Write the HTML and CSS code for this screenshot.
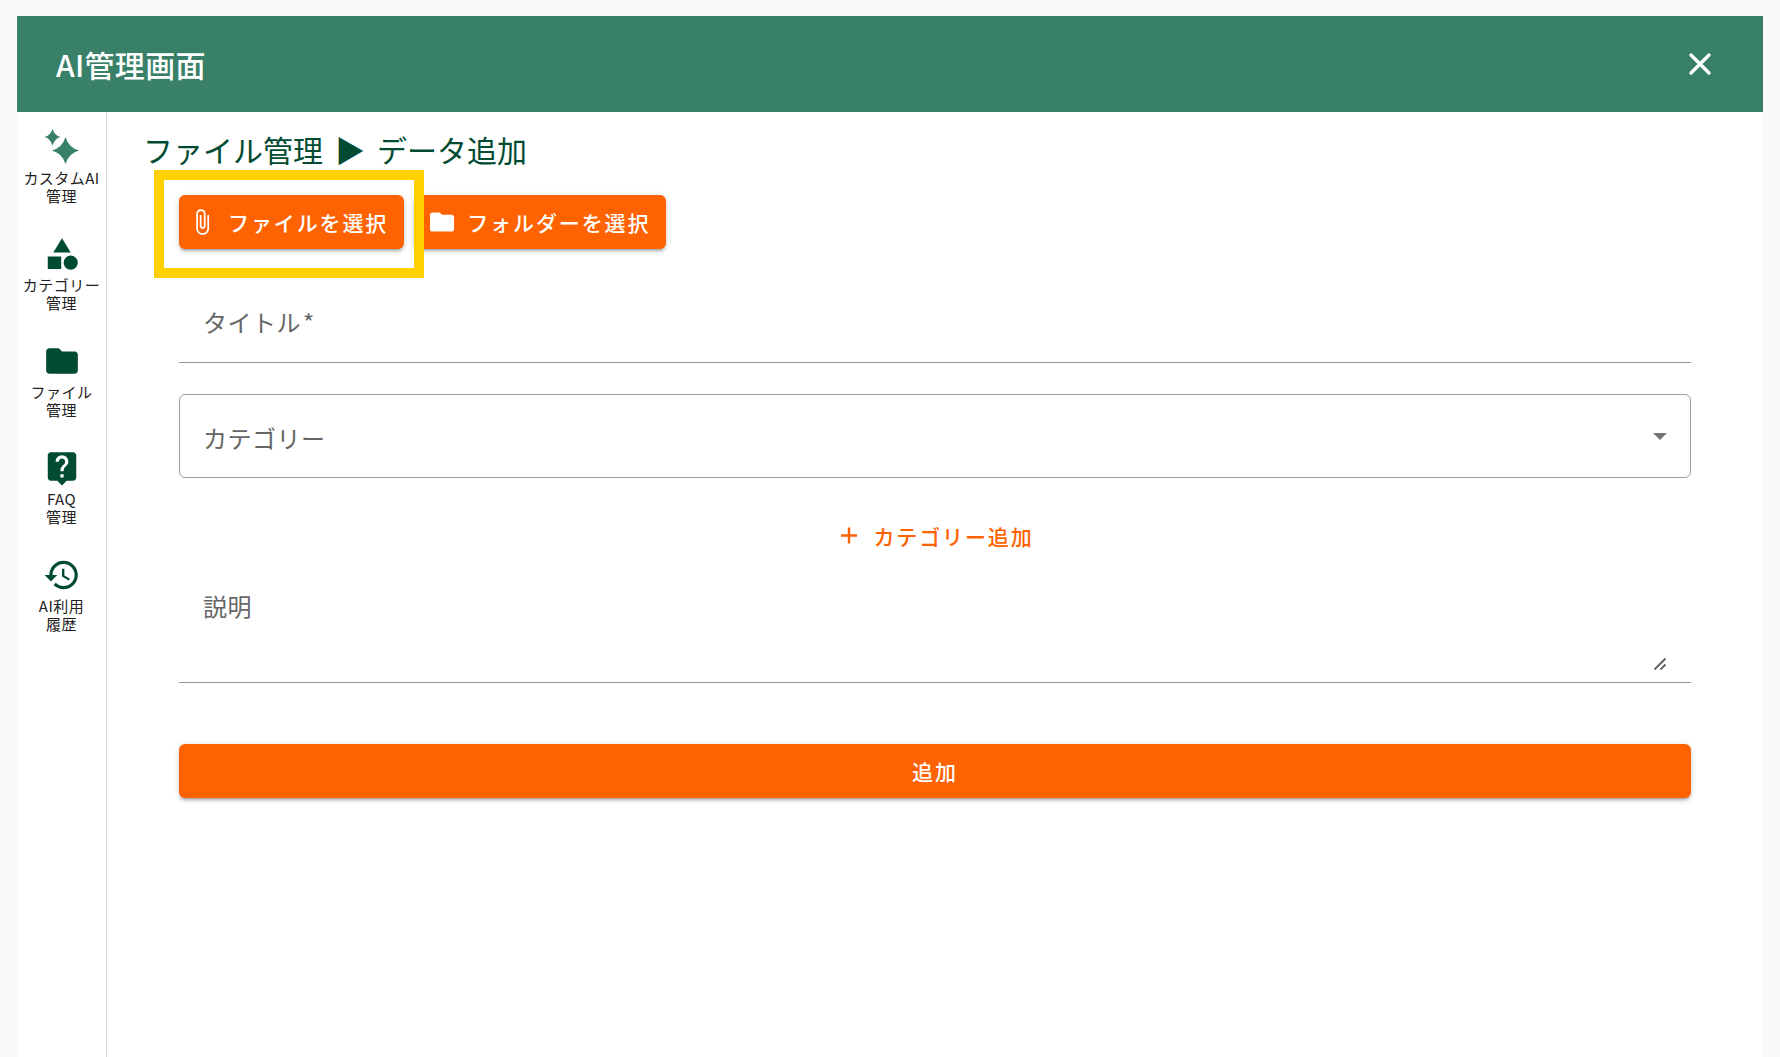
FILE: index.html
```html
<!DOCTYPE html>
<html lang="ja">
<head>
<meta charset="utf-8">
<meta name="viewport" content="width=device-width, initial-scale=1">
<title>AI管理画面</title>
<link rel="stylesheet" href="styles.css">
</head>
<body>
<div class="panel">
  <header class="panel-header">
    <h1 class="panel-title">AI管理画面</h1>
    <button class="close" type="button" aria-label="閉じる">
      <svg viewBox="0 0 24 24" width="24" height="24" fill="none" stroke="currentColor" stroke-width="3.4" stroke-linecap="round"><path d="M3 3l18 18M21 3L3 21"/></svg>
    </button>
  </header>
  <div class="panel-body">
    <nav class="side">
      <a class="side-item" href="#custom">
        <svg class="side-icon side-icon-light" viewBox="0 0 38 38"><path d="M9.500 1Q11.500 7.500 17.500 9Q11.500 10.500 9.500 17.500Q7.500 10.500 1.500 9Q7.500 7.500 9.500 1zM22.500 9Q25.500 19.500 36 22.500Q25.500 25.500 22.500 36Q19.500 25.500 9 22.500Q19.500 19.500 22.500 9z"/></svg>
        <span>カスタムAI<br>管理</span>
      </a>
      <a class="side-item" href="#category">
        <svg class="side-icon" viewBox="0 0 24 24"><path d="M12 2l-5.500 9h11zM3 13.500h8.500v8H3z"/><circle cx="17.500" cy="17.500" r="4.500"/></svg>
        <span>カテゴリー<br>管理</span>
      </a>
      <a class="side-item" href="#file">
        <svg class="side-icon" viewBox="0 0 24 24"><path d="M10 4H4c-1.100 0-2 .9-2 2v12c0 1.100.9 2 2 2h16c1.100 0 2-.9 2-2V8c0-1.100-.9-2-2-2h-8l-2-2z"/></svg>
        <span>ファイル<br>管理</span>
      </a>
      <a class="side-item" href="#faq">
        <svg class="side-icon" viewBox="0 0 24 24"><path d="M19 2H5c-1.110 0-2 .9-2 2v14c0 1.100.89 2 2 2h4l3 3 3-3h4c1.100 0 2-.9 2-2V4c0-1.100-.9-2-2-2zm-6 16h-2v-2h2v2zm2.070-7.750l-.9.920C13.450 11.900 13 12.500 13 14h-2v-.5c0-1.100.45-2.100 1.170-2.830l1.240-1.260c.37-.36.59-.86.59-1.410 0-1.100-.9-2-2-2s-2 .9-2 2H8c0-2.210 1.790-4 4-4s4 1.790 4 4c0 .88-.36 1.680-.93 2.250z"/></svg>
        <span>FAQ<br>管理</span>
      </a>
      <a class="side-item" href="#history">
        <svg class="side-icon" viewBox="0 0 24 24"><path d="M13 3c-4.970 0-9 4.030-9 9H1l3.890 3.890.07.14L9 12H6c0-3.870 3.130-7 7-7s7 3.130 7 7-3.130 7-7 7c-1.930 0-3.680-.79-4.940-2.060l-1.420 1.420C8.270 19.990 10.510 21 13 21c4.970 0 9-4.030 9-9s-4.030-9-9-9zm-1 5v5l4.280 2.540.72-1.210-3.500-2.080V8H12z"/></svg>
        <span>AI利用<br>履歴</span>
      </a>
    </nav>
    <main class="content">
      <h2 class="crumbs"><span>ファイル管理</span><span>▶</span><span>データ追加</span></h2>
      <form class="form">
        <div class="pickers">
          <div class="picked">
            <button class="btn btn-fill" type="button">
              <svg viewBox="6 0 17 24" width="20" height="28" fill="currentColor"><path d="M16.500 6v11.500c0 2.210-1.790 4-4 4s-4-1.790-4-4V5c0-1.380 1.120-2.500 2.500-2.500s2.500 1.120 2.500 2.500v10.500c0 .55-.45 1-1 1s-1-.45-1-1V6H10v9.500c0 1.380 1.120 2.500 2.500 2.500s2.500-1.120 2.500-2.500V5c0-2.210-1.790-4-4-4S7 2.790 7 5v12.500c0 3.040 2.460 5.500 5.500 5.500s5.500-2.460 5.500-5.500V6h-1.500z"/></svg>
              <span>ファイルを選択</span>
            </button>
          </div>
          <button class="btn btn-fill" type="button">
            <svg viewBox="2 2 20 20" width="24" height="24" fill="currentColor"><path d="M10 4H4c-1.100 0-2 .9-2 2v12c0 1.100.9 2 2 2h16c1.100 0 2-.9 2-2V8c0-1.100-.9-2-2-2h-8l-2-2z"/></svg>
            <span>フォルダーを選択</span>
          </button>
        </div>
        <div class="field field-title">
          <label for="title">タイトル<span class="required">*</span></label>
          <input id="title" type="text" required>
        </div>
        <div class="field field-select">
          <label for="category">カテゴリー</label>
          <select id="category"><option value=""></option></select>
          <svg class="caret" viewBox="0 0 14 7" width="14" height="7"><path d="M0 0h14L7 7z"/></svg>
        </div>
        <button class="btn btn-text" type="button">
          <svg viewBox="0 0 24 24" width="24" height="24" fill="none" stroke="currentColor" stroke-width="2.400"><path d="M5 11.500h16M13 3.500v16"/></svg>
          <span>カテゴリー追加</span>
        </button>
        <div class="field field-area">
          <label for="desc">説明</label>
          <textarea id="desc"></textarea>
          <svg class="grip" viewBox="0 0 12 12" width="12" height="12"><path d="M0.500 11.500l11-11M6.500 11.500l5-5"/></svg>
        </div>
        <button class="btn btn-fill btn-submit" type="submit">追加</button>
      </form>
    </main>
  </div>
</div>
</body>
</html>
```
FILE: styles.css
```css
* { box-sizing: border-box; }

body {
  margin: 0;
  min-height: 100vh;
  padding: 16px 17px 0;
  display: flex;
  background: #fafafa;
  font-family: "Noto Sans CJK JP", sans-serif;
  color: #212121;
}

button, input, select, textarea { font: inherit; color: inherit; }

.panel {
  flex: 1;
  display: flex;
  flex-direction: column;
  background: #fff;
}

.panel-header {
  display: flex;
  align-items: center;
  justify-content: space-between;
  height: 96px;
  padding: 0 39px;
  background: #388067;
  color: #fff;
}

.panel-title {
  margin: 0;
  font-size: 30px;
  line-height: 44px;
  font-weight: 500;
  letter-spacing: 0.01em;
}

.close {
  display: flex;
  align-items: center;
  justify-content: center;
  width: 48px;
  height: 48px;
  padding: 0;
  border: 0;
  background: none;
  cursor: pointer;
}

.panel-body { flex: 1; display: flex; }

.side {
  flex: none;
  display: flex;
  flex-direction: column;
  gap: 30px;
  width: 90px;
  padding-top: 16px;
  border-right: 1px solid #dcdcdc;
}

.side-item {
  display: flex;
  flex-direction: column;
  align-items: center;
  gap: 3px;
  color: inherit;
  font-size: 15px;
  line-height: 18px;
  letter-spacing: 0.03em;
  text-align: center;
  text-decoration: none;
  white-space: nowrap;
}

.side-icon { width: 38px; height: 38px; fill: #004b32; }
.side-icon-light { fill: #388067; }

.content { flex: 1; min-width: 0; }

.crumbs {
  display: flex;
  gap: 12px;
  margin: 0;
  padding: 15px 36px 0;
  font-size: 30px;
  line-height: 44px;
  font-weight: 400;
  color: #004b32;
}

.form {
  display: flex;
  flex-direction: column;
  padding: 24px 72px 40px;
}

.pickers { display: flex; gap: 10px; }

.picked { position: relative; }

.picked::after {
  content: "";
  position: absolute;
  z-index: 1;
  inset: -25px -20px -29px -25px;
  border: 10px solid #ffcf00;
  pointer-events: none;
}

.btn {
  display: flex;
  align-items: center;
  justify-content: center;
  gap: 13px;
  height: 54px;
  padding: 0 16px;
  border: 0;
  border-radius: 6px;
  font-size: 21px;
  line-height: 32px;
  font-weight: 500;
  letter-spacing: 0.09em;
  white-space: nowrap;
  cursor: pointer;
}

.btn-fill {
  background: #ff6200;
  color: #fff;
  box-shadow: 0 4px 2px -3px rgba(0, 0, 0, 0.2), 0 3px 3px rgba(0, 0, 0, 0.14), 0 1px 7px rgba(0, 0, 0, 0.12);
}

.btn-text {
  align-self: center;
  margin-top: 31px;
  background: none;
  color: #ff6200;
}

.btn-submit { margin-top: 61px; }

.field {
  position: relative;
  display: grid;
  font-size: 24px;
  line-height: 36px;
}

.field label {
  position: absolute;
  top: 25px;
  left: 24px;
  color: #666;
  letter-spacing: 0.02em;
  pointer-events: none;
}

.required { margin-left: 2px; }

.field input,
.field select,
.field textarea {
  width: 100%;
  padding: 0 24px;
  border: 0;
  outline: 0;
  background: none;
}

.field-title { margin-top: 30px; border-bottom: 1px solid #949494; }
.field-title input { height: 83px; }

.field-select { margin-top: 31px; }
.field-select label { top: 26px; }

.field-select select {
  height: 84px;
  border: 1px solid #9e9e9e;
  border-radius: 6px;
  appearance: none;
}

.caret {
  position: absolute;
  top: 39px;
  right: 24px;
  fill: #757575;
  pointer-events: none;
}

.field-area {
  padding: 24px 24px 10px;
  border-bottom: 1px solid #949494;
}

.field-area textarea {
  height: 85px;
  padding: 0;
  resize: vertical;
}

.field-area textarea::-webkit-resizer { background: none; }

.grip {
  position: absolute;
  right: 25px;
  bottom: 12px;
  fill: none;
  stroke: #666;
  stroke-width: 2px;
  pointer-events: none;
}
```
